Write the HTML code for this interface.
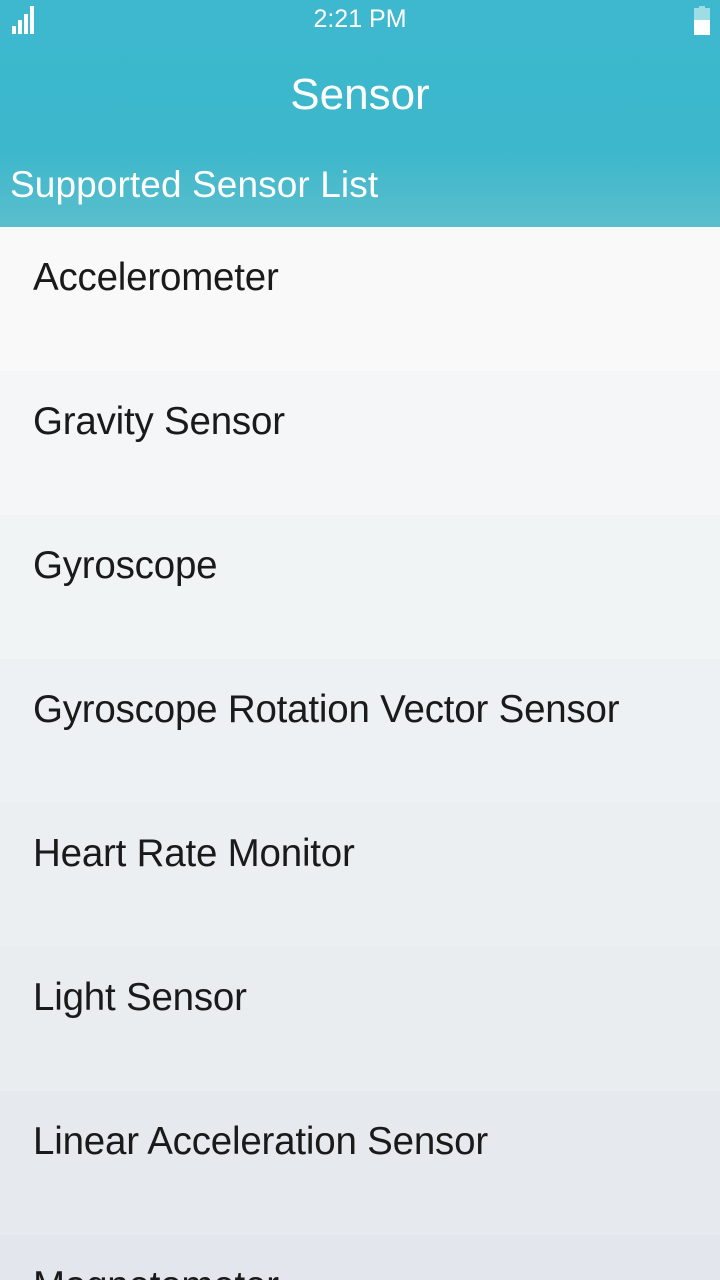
<!DOCTYPE html>
<html style="overflow:hidden;height:1280px"><head><style>
body{margin:0;width:720px;height:1280px;overflow:hidden;position:relative;font-family:"Liberation Sans",sans-serif;}
.hdr{position:absolute;left:0;top:0;width:720px;height:227px;background:linear-gradient(#3db8ce 0,#3cb7cc 150px,#5bbecc 227px);color:#fff}
.time{position:absolute;top:5px;width:720px;text-align:center;font-size:25px}
.title{position:absolute;top:70px;width:720px;text-align:center;font-size:44px}
.sub{position:absolute;left:10px;top:164px;font-size:37px;letter-spacing:0.1px}
.row{position:absolute;left:0;width:720px;height:144px}
.row span{position:absolute;left:33px;top:29px;font-size:38.5px;color:#1a1a1a;letter-spacing:-0.2px;white-space:nowrap}
</style></head><body>
<div class="hdr">
<svg style="position:absolute;left:12px;top:6px" width="24" height="28"><rect x="0" y="20" width="4" height="8" fill="#fff"/><rect x="6" y="14" width="4" height="14" fill="#fff"/><rect x="12" y="8" width="4" height="20" fill="#fff"/><rect x="18" y="0" width="4" height="28" fill="#fff"/></svg>
<svg style="position:absolute;left:694px;top:6px" width="16" height="29"><rect x="5" y="0" width="6" height="3" fill="#9fdde6"/><rect x="0" y="2" width="16" height="12" fill="#9fdde6"/><rect x="0" y="14" width="16" height="15" fill="#fff"/></svg>
<div class="time">2:21 PM</div>
<div class="title">Sensor</div>
<div class="sub">Supported Sensor List</div>
</div>
<div class="row" style="top:227px;background:#f9f9f9"><span>Accelerometer</span></div>
<div class="row" style="top:371px;background:#f4f6f7"><span>Gravity Sensor</span></div>
<div class="row" style="top:515px;background:#f1f4f5"><span>Gyroscope</span></div>
<div class="row" style="top:659px;background:#eef1f3"><span>Gyroscope Rotation Vector Sensor</span></div>
<div class="row" style="top:803px;background:#ebeff1"><span>Heart Rate Monitor</span></div>
<div class="row" style="top:947px;background:#e9edf0"><span>Light Sensor</span></div>
<div class="row" style="top:1091px;background:#e6eaee"><span>Linear Acceleration Sensor</span></div>
<div class="row" style="top:1235px;height:45px;overflow:hidden;background:#e3e7ed"><span>Magnetometer</span></div>
</body></html>
